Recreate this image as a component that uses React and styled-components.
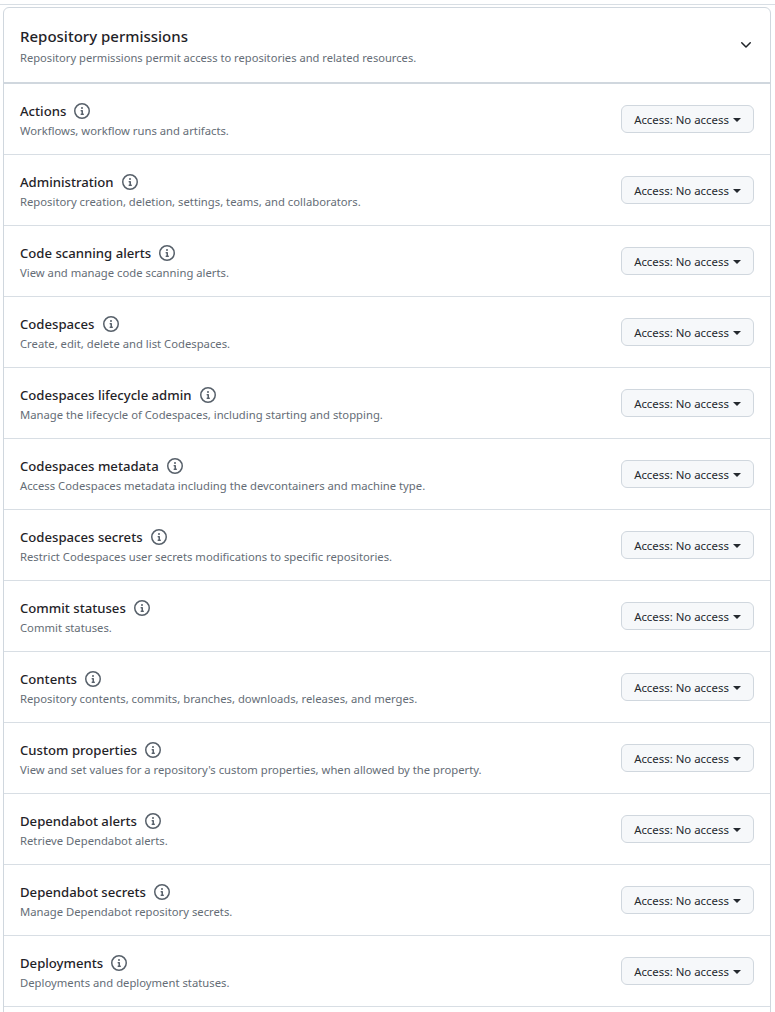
import React from 'react';
import styled, { createGlobalStyle } from 'styled-components';

const permissions = [
  ['Actions', 'Workflows, workflow runs and artifacts.'],
  ['Administration', 'Repository creation, deletion, settings, teams, and collaborators.'],
  ['Code scanning alerts', 'View and manage code scanning alerts.'],
  ['Codespaces', 'Create, edit, delete and list Codespaces.'],
  ['Codespaces lifecycle admin', 'Manage the lifecycle of Codespaces, including starting and stopping.'],
  ['Codespaces metadata', 'Access Codespaces metadata including the devcontainers and machine type.'],
  ['Codespaces secrets', 'Restrict Codespaces user secrets modifications to specific repositories.'],
  ['Commit statuses', 'Commit statuses.'],
  ['Contents', 'Repository contents, commits, branches, downloads, releases, and merges.'],
  ['Custom properties', "View and set values for a repository's custom properties, when allowed by the property."],
  ['Dependabot alerts', 'Retrieve Dependabot alerts.'],
  ['Dependabot secrets', 'Manage Dependabot repository secrets.'],
  ['Deployments', 'Deployments and deployment statuses.'],
];

const GlobalStyle = createGlobalStyle`
  html, body {
    margin: 0;
    height: 100%;
    overflow: hidden;
    background: #fff;
  }
  body {
    font-family: "Noto Sans", "Liberation Sans", sans-serif;
    color: #1f2328;
  }
`;

const Page = styled.div`
  padding-top: 4px;
`;

const TopRule = styled.div`
  height: 1px;
  background: #d8dee4;
  margin-bottom: 2px;
`;

const Card = styled.div`
  margin: 0 4px 0 3px;
  border: 1px solid #d0d7de;
  border-radius: 6px;
`;

const Header = styled.div`
  height: 76px;
  box-sizing: border-box;
  padding: 0 16px;
  display: flex;
  align-items: center;
  justify-content: space-between;
  border-bottom: 2px solid #d0d7de;
`;

const HeaderCopy = styled.div`
  padding-top: 2px;
`;

const HeaderTitle = styled.div`
  font-size: 15px;
  line-height: 22px;
  font-weight: 500;
  margin-bottom: 2px;
`;

const HeaderText = styled.div`
  font-size: 11.17px;
  line-height: 18px;
  color: #656d76;
`;

const Chevron = styled.svg`
  width: 16px;
  height: 16px;
  fill: #1f2328;
`;

const Row = styled.div`
  height: 71px;
  box-sizing: border-box;
  padding: 0 16px;
  display: flex;
  align-items: center;
  justify-content: space-between;
  border-bottom: 1px solid #d8dee4;
`;

const RowCopy = styled.div`
  padding-top: 1px;
`;

const NameLine = styled.div`
  display: flex;
  align-items: center;
  gap: 8px;
  height: 20px;
  margin-bottom: 1px;
`;

const Name = styled.span`
  font-size: 13.15px;
  font-weight: 500;
  line-height: 20px;
`;

const InfoIcon = styled.svg`
  width: 16px;
  height: 16px;
  fill: #57606a;
`;

const Description = styled.div`
  font-size: 11.27px;
  line-height: 17px;
  color: #656d76;
`;

const AccessButton = styled.button`
  width: 133px;
  height: 28px;
  padding: 0;
  display: flex;
  align-items: center;
  justify-content: center;
  gap: 4px;
  border: 1px solid #d0d7de;
  border-radius: 6px;
  background: #f6f8fa;
  color: #24292f;
  font-family: inherit;
  font-size: 11.4px;
`;

const Caret = styled.span`
  width: 0;
  height: 0;
  margin-top: 1px;
  border-style: solid;
  border-width: 4px 4px 0;
  border-color: #24292f transparent transparent;
`;

// the list carries on below the fold, only its side borders show
const Remainder = styled.div`
  height: 40px;
`;

const Info = () => (
  <InfoIcon viewBox="0 0 16 16">
    <path d="M0 8a8 8 0 1 1 16 0A8 8 0 0 1 0 8Zm8-6.5a6.5 6.5 0 1 0 0 13 6.5 6.5 0 0 0 0-13ZM6.5 7.75A.75.75 0 0 1 7.25 7h1a.75.75 0 0 1 .75.75v2.75h.25a.75.75 0 0 1 0 1.5h-2a.75.75 0 0 1 0-1.5h.25v-2h-.25a.75.75 0 0 1-.75-.75ZM8 6a1 1 0 1 1 0-2 1 1 0 0 1 0 2Z" />
  </InfoIcon>
);

const PermissionRow = ({ name, description }) => (
  <Row>
    <RowCopy>
      <NameLine>
        <Name>{name}</Name>
        <Info />
      </NameLine>
      <Description>{description}</Description>
    </RowCopy>
    <AccessButton>
      Access: No access
      <Caret />
    </AccessButton>
  </Row>
);

export default function App() {
  return (
    <Page>
      <GlobalStyle />
      <TopRule />
      <Card>
        <Header>
          <HeaderCopy>
            <HeaderTitle>Repository permissions</HeaderTitle>
            <HeaderText>Repository permissions permit access to repositories and related resources.</HeaderText>
          </HeaderCopy>
          <Chevron viewBox="0 0 16 16">
            <path d="M12.78 5.22a.749.749 0 0 1 0 1.06l-4.25 4.25a.749.749 0 0 1-1.06 0L3.22 6.28a.749.749 0 1 1 1.06-1.06L8 8.939l3.72-3.719a.749.749 0 0 1 1.06 0Z" />
          </Chevron>
        </Header>
        {permissions.map(([name, description]) => (
          <PermissionRow key={name} name={name} description={description} />
        ))}
        <Remainder />
      </Card>
    </Page>
  );
}
